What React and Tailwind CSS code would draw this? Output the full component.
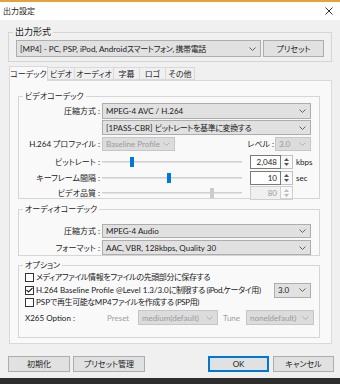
import React from "react";

const Chevron = ({ color = "#606060" }) => (
  <svg width="7" height="4" viewBox="0 0 7 4" className="shrink-0">
    <path d="M0.5 0.5 L3.5 3.5 L6.5 0.5" fill="none" stroke={color} strokeWidth="1" />
  </svg>
);

const Select = ({ value, className = "", disabled }) => (
  <div
    className={`flex items-center justify-between border pl-[3px] pr-[4px] ${
      disabled
        ? "border-[#c6c6c6] bg-[#dcdcdc] text-[#9a9a9a]"
        : "border-[#adadad] bg-[#e1e1e1] text-[#1a1a1a]"
    } ${className}`}
  >
    <span>{value}</span>
    <Chevron color={disabled ? "#b0b0b0" : "#606060"} />
  </div>
);

const Button = ({ children, className = "" }) => (
  <div className={`flex items-center justify-center border bg-[#e1e1e1] h-[16px] ${className}`}>
    {children}
  </div>
);

const Group = ({ label, className = "", children }) => (
  <fieldset className={`border border-[#d5d5d5] ${className}`}>
    <legend className="ml-[4px] px-[2px] leading-[10px]">{label}</legend>
    {children}
  </fieldset>
);

const Spin = ({ value, disabled }) => (
  <div className="flex h-[14px] w-[43px]">
    <div
      className={`flex-1 flex items-center justify-end pr-[3px] border ${
        disabled ? "border-[#cfcfcf] bg-[#f0f0f0] text-[#9a9a9a]" : "border-[#7a7a7a] bg-white"
      }`}
    >
      {value}
    </div>
    <div className={`w-[12px] flex flex-col items-center justify-center gap-[2px] border border-l-0 ${disabled ? "border-[#cfcfcf]" : "border-[#c0c0c0]"}`}>
      <svg width="5" height="3" viewBox="0 0 5 3"><path d="M0 3 L2.5 0 L5 3Z" fill={disabled ? "#bbb" : "#555"} /></svg>
      <svg width="5" height="3" viewBox="0 0 5 3"><path d="M0 0 L2.5 3 L5 0Z" fill={disabled ? "#bbb" : "#555"} /></svg>
    </div>
  </div>
);

const Slider = ({ thumb, disabled }) => (
  <div className="relative w-[140px] h-[12px] flex items-center">
    <div className="h-[2px] w-full bg-[#e3e3e3] border-t border-[#d0d0d0]" />
    <div
      className={`absolute top-[1px] w-[4px] h-[10px] ${disabled ? "bg-[#cccccc]" : "bg-[#0078d7]"}`}
      style={{ left: thumb }}
    />
  </div>
);

const Check = ({ checked, children }) => (
  <div className="flex items-center h-[10px] gap-[2px]">
    <div className="w-[9px] h-[9px] border border-[#333] bg-white flex items-center justify-center">
      {checked && (
        <svg width="7" height="6" viewBox="0 0 7 6">
          <path d="M0.5 3 L2.6 5 L6.5 0.8" fill="none" stroke="#222" strokeWidth="1.2" />
        </svg>
      )}
    </div>
    <span>{children}</span>
  </div>
);

const Label = ({ children }) => (
  <span className="w-[82px] text-right pr-[2px] shrink-0">{children}</span>
);

// Japanese runs are a little narrower in the original UI font
const Jp = ({ children }) => <span className="tracking-[-0.4px]">{children}</span>;

export default function App() {
  const tabs = [
    ["コーデック", "w-[39px]"],
    ["ビデオ", "w-[28px]"],
    ["オーディオ", "w-[40px]"],
    ["字幕", "w-[27px]"],
    ["ロゴ", "w-[27px]"],
    ["その他", "w-[30px]"],
  ];

  return (
    <div className="w-[340px] h-[384px] bg-[#2e2e2e] text-[8px] text-[#1a1a1a] font-['Lato','Noto_Sans_CJK_JP',sans-serif] [font-feature-settings:'palt'] leading-none whitespace-nowrap">
      <div className="h-[378px] bg-[#f0f0f0] flex flex-col">
        {/* title bar */}
        <div className="h-[20px] bg-white border-t-2 border-[#e3a23a] flex items-center justify-between pl-[3px] pr-[7px]">
          <span className="text-[8px]">出力設定</span>
          <svg width="8" height="8" viewBox="0 0 8 8">
            <path d="M0.5 0.5 L7.5 7.5 M7.5 0.5 L0.5 7.5" stroke="#333" strokeWidth="1" />
          </svg>
        </div>

        <div className="px-[8px] pt-[7px] flex flex-col">
          <Group label={<span className="text-[9px]">出力形式</span>} className="w-[324px] pb-[4px]">
            <div className="flex items-center gap-[2px] pl-[7px] pt-[3px]">
              <Select
                className="w-[245px] h-[17px]"
                value={<>[MP4] - PC, PSP, iPod, Android<Jp>スマートフォン, 携帯電話</Jp></>}
              />
              <Button className="w-[61px] h-[17px] border-[#adadad]">プリセット</Button>
            </div>
          </Group>

          {/* tabs */}
          <div className="flex items-end mt-[4px] ml-[1px] h-[14px]">
            {tabs.map(([t, w], i) => (
              <div
                key={t}
                className={`${w} flex items-center justify-center border border-[#d9d9d9] ${
                  i === 0 ? "h-[15px] bg-[#f9f9f9] border-b-0 relative z-10 -mb-[1px]" : "h-[13px] bg-[#f0f0f0] -ml-px"
                }`}
              >
                {t}
              </div>
            ))}
          </div>

          <div className="ml-[1px] w-[323px] h-[264px] border border-[#d9d9d9] bg-[#f9f9f9] pl-[8px] pt-[10px] flex flex-col">
            <Group label="ビデオコーデック" className="w-[302px] h-[108px]">
              <div className="flex flex-col pl-[1px] pt-[2px]">
                <div className="flex items-center">
                  <Label>圧縮方式 :</Label>
                  <Select className="w-[209px] h-[16px]" value="MPEG-4 AVC / H.264" />
                </div>
                <div className="flex items-center mt-[1px]">
                  <Label />
                  <Select
                    className="w-[209px] h-[15px]"
                    value={<>[1PASS-CBR] <Jp>ビットレートを基準に変換する</Jp></>}
                  />
                </div>
                <div className="flex items-center mt-[2px]">
                  <Label>H.264 プロファイル :</Label>
                  <Select disabled className="w-[73px] h-[14px]" value="Baseline Profile" />
                  <span className="ml-auto mr-[1px]">レベル :</span>
                  <Select disabled className="w-[36px] h-[14px] mr-[8px]" value="3.0" />
                </div>
                <div className="flex items-center mt-[4px]">
                  <Label>ビットレート :</Label>
                  <Slider thumb="28px" />
                  <div className="ml-[8px]"><Spin value="2,048" /></div>
                  <span className="ml-[3px]">kbps</span>
                </div>
                <div className="flex items-center mt-[2px]">
                  <Label>キーフレーム間隔 :</Label>
                  <Slider thumb="65px" />
                  <div className="ml-[8px]"><Spin value="10" /></div>
                  <span className="ml-[3px]">sec</span>
                </div>
                <div className="flex items-center mt-[1px]">
                  <Label>ビデオ品質 :</Label>
                  <Slider thumb="108px" disabled />
                  <div className="ml-[8px]"><Spin value="80" disabled /></div>
                </div>
              </div>
            </Group>

            <Group label="オーディオコーデック" className="w-[302px] h-[52px] mt-[5px]">
              <div className="flex flex-col pl-[1px] pt-[10px]">
                <div className="flex items-center">
                  <Label>圧縮方式 :</Label>
                  <Select className="w-[209px] h-[14px]" value="MPEG-4 Audio" />
                </div>
                <div className="flex items-center mt-[2px]">
                  <Label>フォーマット :</Label>
                  <Select className="w-[209px] h-[15px]" value="AAC, VBR, 128kbps, Quality 30" />
                </div>
              </div>
            </Group>

            <Group label="オプション" className="w-[302px] h-[78px] mt-[4px]">
              <div className="flex flex-col pl-[6px] pt-[2px]">
                <Check><Jp>メディアファイル情報をファイルの先頭部分に保存する</Jp></Check>
                <div className="flex items-center mt-[1px] h-[14px]">
                  <Check checked>
                    H.264 Baseline Profile @Level 1.3/3.0<Jp>に制限する (iPod,ケータイ用)</Jp>
                  </Check>
                  <Select className="w-[37px] h-[15px] ml-auto mr-[8px]" value="3.0" />
                </div>
                <div>
                  <Check>PSP<Jp>で再生可能な</Jp>MP4<Jp>ファイルを作成する (PSP用)</Jp></Check>
                </div>
                <div className="flex items-center mt-[3px]">
                  <span className="w-[82px]">X265 Option :</span>
                  <span className="text-[#a0a0a0] w-[31px]">Preset</span>
                  <Select disabled className="w-[80px] h-[15px]" value="medium(default)" />
                  <span className="text-[#a0a0a0] ml-[5px] w-[23px]">Tune</span>
                  <Select disabled className="w-[68px] h-[15px]" value="none(default)" />
                </div>
              </div>
            </Group>
          </div>

          {/* bottom buttons */}
          <div className="flex items-center mt-[12px]">
            <Button className="w-[62px] border-[#adadad]">初期化</Button>
            <Button className="w-[72px] ml-[3px] border-[#adadad]">プリセット管理</Button>
            <Button className="w-[61px] ml-auto border-2 border-[#0078d7]">OK</Button>
            <Button className="w-[61px] ml-[4px] mr-[-2px] border-[#adadad]">キャンセル</Button>
          </div>
        </div>
      </div>
    </div>
  );
}
